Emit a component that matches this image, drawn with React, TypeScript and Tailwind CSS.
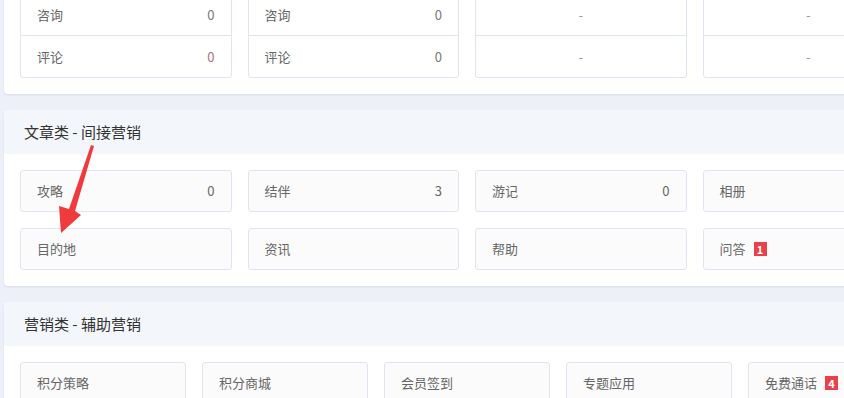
import React from 'react';

type Item = { label: string; value?: string; badge?: string };

const article: Item[] = [
  { label: '攻略', value: '0' },
  { label: '结伴', value: '3' },
  { label: '游记', value: '0' },
  { label: '相册' },
  { label: '目的地' },
  { label: '资讯' },
  { label: '帮助' },
  { label: '问答', badge: '1' },
];

const marketing: Item[] = [
  { label: '积分策略' },
  { label: '积分商城' },
  { label: '会员签到' },
  { label: '专题应用' },
  { label: '免费通话', badge: '4' },
];

const font = { fontFamily: '"Noto Sans CJK SC", "Noto Sans", sans-serif' };

function Badge({ n }: { n: string }) {
  return (
    <span className="ml-2 inline-flex h-[14px] w-[13px] items-center justify-center bg-[#e8414b] text-[11px] font-bold leading-none text-white">
      {n}
    </span>
  );
}

function Card({ item }: { item: Item }) {
  return (
    <div className="flex h-[42px] items-center justify-between rounded-[3px] border border-[#dfe5f1] bg-[#fbfbfc] px-4 text-[13px] text-[#666]">
      <div className="flex items-center">
        <span>{item.label}</span>
        {item.badge && <Badge n={item.badge} />}
      </div>
      {item.value && <span className="text-[#666]">{item.value}</span>}
    </div>
  );
}

function StatCard({ rows, dash }: { rows: { label: string; value: string; red?: boolean }[]; dash?: boolean }) {
  return (
    <div className="rounded-[3px] border border-[#dfe5f1] bg-white">
      {rows.map((r, i) => (
        <div
          key={i}
          className={`flex h-[41px] items-center px-4 text-[13px] text-[#666] ${i < rows.length - 1 ? 'border-b border-[#dfe5f1]' : ''} ${dash ? 'justify-center' : 'justify-between'}`}
        >
          {dash ? (
            <span className="text-[#999]">-</span>
          ) : (
            <>
              <span>{r.label}</span>
              <span className={r.red ? 'text-[#a8737a]' : 'text-[#777]'}>{r.value}</span>
            </>
          )}
        </div>
      ))}
    </div>
  );
}

function Panel({ title, children }: { title: string; children: React.ReactNode }) {
  return (
    <div className="overflow-hidden rounded-[4px] bg-white shadow-[0_1px_2px_rgba(120,130,180,0.18)]">
      <div className="flex h-[44px] items-center bg-[#f3f6fa] pl-5 text-[15px] text-[#333]">{title}</div>
      <div className="p-4">{children}</div>
    </div>
  );
}

export default function App() {
  return (
    <div className="relative h-[398px] w-[844px] overflow-hidden bg-[#edf0f8]" style={font}>
      <div className="flex w-[930px] flex-col gap-4 pl-1">
        <div className="-mt-[22px] rounded-[4px] bg-white p-4 shadow-[0_1px_2px_rgba(120,130,180,0.18)]">
          <div className="grid grid-cols-4 gap-4">
            <StatCard rows={[{ label: '咨询', value: '0' }, { label: '评论', value: '0', red: true }]} />
            <StatCard rows={[{ label: '咨询', value: '0' }, { label: '评论', value: '0' }]} />
            <StatCard dash rows={[{ label: '', value: '' }, { label: '', value: '' }]} />
            <StatCard dash rows={[{ label: '', value: '' }, { label: '', value: '' }]} />
          </div>
        </div>

        <Panel title="文章类 - 间接营销">
          <div className="grid grid-cols-4 gap-4">
            {article.map((it) => (
              <Card key={it.label} item={it} />
            ))}
          </div>
        </Panel>

        <Panel title="营销类 - 辅助营销">
          <div className="grid grid-cols-5 gap-4">
            {marketing.map((it) => (
              <Card key={it.label} item={it} />
            ))}
          </div>
        </Panel>
      </div>

      <svg className="pointer-events-none absolute left-0 top-0" width="844" height="398">
        <polygon
          points="91,145 94,146 75,211 81,215 61,233 59,206 69,209"
          fill="#f03a3b"
        />
      </svg>
    </div>
  );
}
